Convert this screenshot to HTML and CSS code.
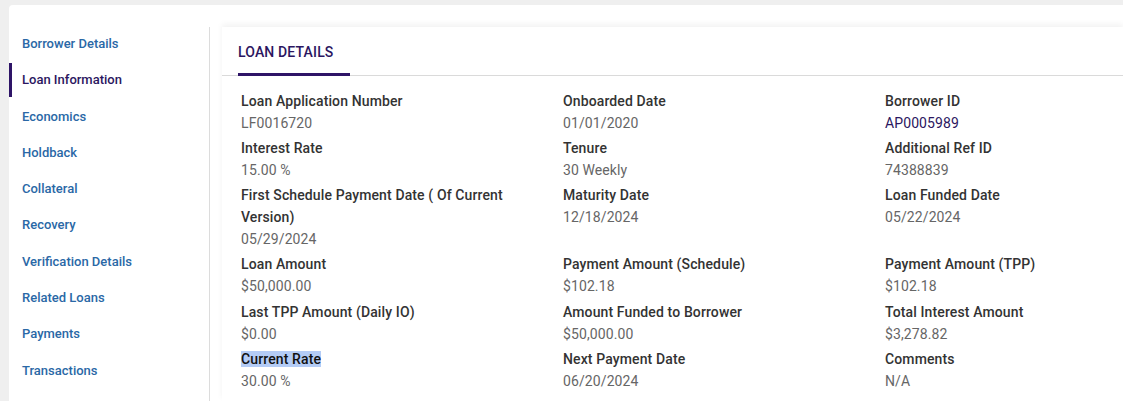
FILE: index.html
```html
<html lang="en">
<head>
    <meta charset="UTF-8">
    <meta name="viewport" content="width=device-width, initial-scale=1.0">
    <title>Loan Information</title>
    <link rel="stylesheet" href="styles.css">
</head>
<body>
    <div class="page">
        <div class="card">
            <nav class="sidebar">
                <a href="#borrower">Borrower Details</a>
                <a href="#loan" class="active">Loan Information</a>
                <a href="#economics">Economics</a>
                <a href="#holdback">Holdback</a>
                <a href="#collateral">Collateral</a>
                <a href="#recovery">Recovery</a>
                <a href="#verification">Verification Details</a>
                <a href="#related">Related Loans</a>
                <a href="#payments">Payments</a>
                <a href="#transactions">Transactions</a>
            </nav>
            <div class="main">
                <div class="tabs">
                    <div class="tab">LOAN DETAILS</div>
                </div>
                <div class="details">
                    <div class="field"><div class="label">Loan Application Number</div><div class="value">LF0016720</div></div>
                    <div class="field"><div class="label">Onboarded Date</div><div class="value">01/01/2020</div></div>
                    <div class="field"><div class="label">Borrower ID</div><div class="value"><a href="#borrower" class="link">AP0005989</a></div></div>

                    <div class="field"><div class="label">Interest Rate</div><div class="value">15.00 %</div></div>
                    <div class="field"><div class="label">Tenure</div><div class="value">30 Weekly</div></div>
                    <div class="field"><div class="label">Additional Ref ID</div><div class="value">74388839</div></div>

                    <div class="field"><div class="label">First Schedule Payment Date ( Of Current Version)</div><div class="value">05/29/2024</div></div>
                    <div class="field"><div class="label">Maturity Date</div><div class="value">12/18/2024</div></div>
                    <div class="field"><div class="label">Loan Funded Date</div><div class="value">05/22/2024</div></div>

                    <div class="field"><div class="label">Loan Amount</div><div class="value">$50,000.00</div></div>
                    <div class="field"><div class="label">Payment Amount (Schedule)</div><div class="value">$102.18</div></div>
                    <div class="field"><div class="label">Payment Amount (TPP)</div><div class="value">$102.18</div></div>

                    <div class="field"><div class="label">Last TPP Amount (Daily IO)</div><div class="value">$0.00</div></div>
                    <div class="field"><div class="label">Amount Funded to Borrower</div><div class="value">$50,000.00</div></div>
                    <div class="field"><div class="label">Total Interest Amount</div><div class="value">$3,278.82</div></div>

                    <div class="field"><div class="label"><span class="selected">Current Rate</span></div><div class="value">30.00 %</div></div>
                    <div class="field"><div class="label">Next Payment Date</div><div class="value">06/20/2024</div></div>
                    <div class="field"><div class="label">Comments</div><div class="value">N/A</div></div>
                </div>
            </div>
        </div>
    </div>
</body>
</html>
```

FILE: styles.css
```css
body { margin: 0; padding: 0; background-color: #efefef; font-family: Roboto, "Liberation Sans", sans-serif; overflow: hidden; }
.page { padding: 5px 0 0 9px; height: 396px; }
.card { display: flex; background-color: #fff; border-radius: 4px 0 0 0; height: 100%; }
.sidebar { width: 200px; flex-shrink: 0; margin-top: 22px; border-right: 1px solid #dcdcdc; }
.sidebar a { display: block; height: 34px; line-height: 34px; margin-bottom: 2.3px; padding-left: 10px; font-size: 13px; font-weight: 500; color: #2a68a6; text-decoration: none; border-left: 3px solid transparent; box-sizing: border-box; }
.sidebar a.active { color: #2b1660; border-left-color: #2e1467; }
.main { flex: 1; margin: 22px 0 0 12px; box-shadow: 0 -3px 6px rgba(0, 0, 0, 0.05); min-width: 0; }
.tabs { display: flex; border-bottom: 1px solid #dadada; padding-left: 16px; }
.tab { padding: 15px 17px 11px 0; line-height: 20px; font-size: 14px; font-weight: 500; letter-spacing: 0.15px; color: #2b1660; border-bottom: 3px solid #2e1467; margin-bottom: -1px; }
.details { display: grid; grid-template-columns: repeat(3, 322px); row-gap: 3.3px; padding: 13.5px 0 0 4px; }
.field { padding: 0 15px; }
.label { font-size: 14px; font-weight: 500; line-height: 22px; letter-spacing: 0.12px; color: #333; }
.value { font-size: 14px; line-height: 22px; letter-spacing: 0.1px; color: #666; }
.value .link { color: #2b1660; text-decoration: none; }
.selected { background-color: #b4ccf6; color: #111; }
```
